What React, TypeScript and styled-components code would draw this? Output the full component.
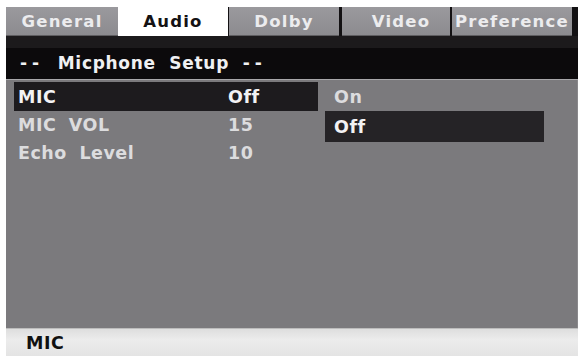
import React from "react";
import styled, { createGlobalStyle } from "styled-components";

const Global = createGlobalStyle`
  html, body { margin: 0; padding: 0; background: #ffffff; }
  body { font-family: "DejaVu Sans", "Liberation Sans", sans-serif; }
`;

const Screen = styled.div`
  margin: 7px 0 0 6px;
  width: 572px;
  height: 349px;
  display: flex;
  flex-direction: column;
`;

const TabBar = styled.div`
  display: flex;
  height: 29px;
  background: #131113;
`;

const Tab = styled.div<{ $w: number; $active?: boolean; $gap?: number; $shift?: number }>`
  width: ${(p) => p.$w}px;
  margin-right: ${(p) => p.$gap ?? 0}px;
  padding-left: ${(p) => p.$shift ?? 0}px;
  display: flex;
  align-items: center;
  justify-content: center;
  font-weight: bold;
  font-size: 16.5px;
  letter-spacing: 1.2px;
  color: ${(p) => (p.$active ? "#141214" : "#ececee")};
  background: ${(p) => (p.$active ? "#ffffff" : "linear-gradient(#9a999d, #8c8b8f)")};
  border-bottom: ${(p) => (p.$active ? "none" : "1px solid #5e5d60")};
  box-sizing: border-box;
`;

const TitleBar = styled.div`
  height: 44px;
  box-sizing: border-box;
  background: linear-gradient(#1c1a1c 0px, #1c1a1c 12px, #0c0a0c 12px);
  padding: 13px 0 0 14px;
  color: #f0f0f2;
  font-weight: bold;
  font-size: 17px;
  letter-spacing: 0.7px;
  line-height: 28px;
  word-spacing: 7px;
  border-bottom: 1px solid #a8a7aa;
`;

const Dashes = styled.span`
  letter-spacing: 5px;
`;

const Body = styled.div`
  flex: 1;
  background: #7b7a7d;
  display: flex;
  padding: 2px 0 0 8px;
  border-right: 1px solid #8a898c;
`;

const List = styled.div`
  width: 304px;
  display: flex;
  flex-direction: column;
`;

const Row = styled.div<{ $sel?: boolean; $h: number }>`
  height: ${(p) => p.$h}px;
  display: flex;
  align-items: center;
  padding-left: 4px;
  background: ${(p) => (p.$sel ? "#1d1b1e" : "transparent")};
  color: ${(p) => (p.$sel ? "#f2f2f4" : "#dcdcde")};
  font-weight: bold;
  font-size: 17.5px;
  letter-spacing: 0.5px;
  word-spacing: 6px;
`;

const Label = styled.span`
  width: 210px;
`;

const Value = styled.span``;

const Sub = styled.div`
  margin-left: 7px;
  width: 219px;
  display: flex;
  flex-direction: column;
`;

const Option = styled.div<{ $sel?: boolean; $h: number }>`
  height: ${(p) => p.$h}px;
  display: flex;
  align-items: center;
  padding-left: 9px;
  background: ${(p) => (p.$sel ? "#252326" : "transparent")};
  color: ${(p) => (p.$sel ? "#f2f2f4" : "#dcdcde")};
  font-weight: bold;
  font-size: 17.5px;
  letter-spacing: 0.5px;
`;

const Status = styled.div`
  height: 27px;
  background: linear-gradient(#dedede, #ececec 40%, #e4e4e4);
  border-top: 1px solid #bdbdbd;
  padding-left: 20px;
  display: flex;
  align-items: center;
  color: #111;
  font-weight: bold;
  font-size: 17.5px;
  letter-spacing: 0.5px;
`;

export default function App() {
  return (
    <>
      <Global />
      <Screen>
        <TabBar>
          <Tab $w={112}>General</Tab>
          <Tab $w={110} $active $gap={1}>Audio</Tab>
          <Tab $w={110} $gap={3}>Dolby</Tab>
          <Tab $w={108} $gap={2} $shift={10}>Video</Tab>
          <Tab $w={120}>Preference</Tab>
        </TabBar>
        <TitleBar>
          <Dashes>--</Dashes> Micphone Setup <Dashes>--</Dashes>
        </TitleBar>
        <Body>
          <List>
            <Row $sel $h={29}>
              <Label>MIC</Label>
              <Value>Off</Value>
            </Row>
            <Row $h={28}>
              <Label>MIC VOL</Label>
              <Value>15</Value>
            </Row>
            <Row $h={28}>
              <Label>Echo Level</Label>
              <Value>10</Value>
            </Row>
          </List>
          <Sub>
            <Option $h={29}>On</Option>
            <Option $sel $h={31}>Off</Option>
          </Sub>
        </Body>
        <Status>MIC</Status>
      </Screen>
    </>
  );
}
